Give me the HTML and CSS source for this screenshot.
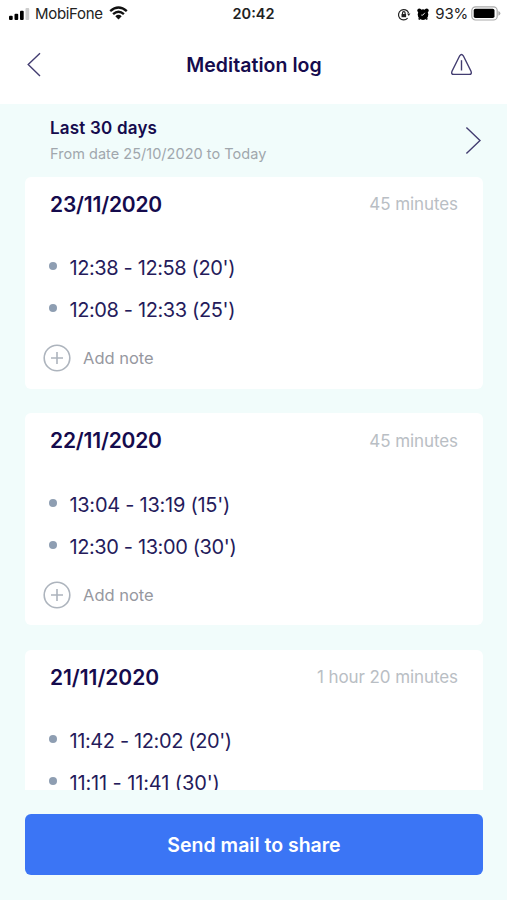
FILE: index.html
```html
<!DOCTYPE html>
<html lang="en">
<head>
<meta charset="utf-8">
<title>Meditation log</title>
<link rel="stylesheet" href="styles.css">
</head>
<body>
<div class="status">
  <div class="status-left">
    <svg class="signal" width="21" height="14" viewBox="0 0 21 14"><rect x="0" y="8.7" width="3.7" height="4.3" rx="1"/><rect x="5.5" y="6.7" width="3.7" height="6.3" rx="1"/><rect x="11" y="3.8" width="3.7" height="9.2" rx="1"/><rect class="off" x="16.5" y="1" width="3.7" height="12" rx="1"/></svg>
    <span class="carrier">MobiFone</span>
    <svg class="wifi" width="19" height="14" viewBox="0 0 19 14" fill="none" stroke="#111" stroke-width="2.4"><path d="M1.2 5.1Q9.5-2.2 17.8 5.1"/><path d="M4.1 8.2Q9.5 3.5 14.9 8.2"/><path d="M6.3 10.2Q9.5 7.5 12.7 10.2L9.5 13.5Z" fill="#111" stroke="none"/></svg>
  </div>
  <span class="clock">20:42</span>
  <div class="status-right">
    <svg class="lock" width="14" height="13" viewBox="0 0 14 13" fill="none" stroke="#222" stroke-width="1.2"><path d="M10.6 10.2A5.2 5.2 0 1 1 11.6 5"/><path d="M10 5.4h3.4L11.8 8Z" fill="#222" stroke="none"/><rect x="4.5" y="6" width="4.6" height="3.2" fill="#222" stroke="none"/><path d="M5.5 6V4.9a1.3 1.3 0 0 1 2.6 0V6"/></svg>
    <svg class="alarm" width="12" height="13" viewBox="0 0 12 13"><circle cx="6" cy="6.6" r="5.3"/><circle cx="2.3" cy="2.4" r="2"/><circle cx="9.7" cy="2.4" r="2"/><path d="M2.8 10.2L1.8 11.6M9.2 10.2l1 1.4" stroke="#111" stroke-width="1.8"/><path d="M7.8 4.8L6 7.1H4.2" fill="none" stroke="#fff" stroke-width=".8"/></svg>
    <span class="percent">93%</span>
    <svg class="battery" width="30" height="15" viewBox="0 0 30 15"><rect x=".8" y=".8" width="25.4" height="13.2" rx="3.8" fill="#fff" stroke="#aaa" stroke-width="1.2"/><rect x="2.7" y="2.7" width="20.8" height="9.4" rx="1.8" fill="#000"/><path d="M27.4 5.1q2 .8 2 2.3t-2 2.3Z" fill="#aaa"/></svg>
  </div>
</div>
<header class="header">
  <svg class="back" width="14" height="26" viewBox="0 0 14 26"><path d="M13 1.2L1.2 12.5L13 24"/></svg>
  <h1>Meditation log</h1>
  <svg class="warn" width="24" height="24" viewBox="0 0 24 24"><path d="M10.7 2.8Q12.5 .1 14.3 2.8L22 18.2Q23.2 21.4 20.3 21.4H4.7Q1.8 21.4 3 18.2Z"/><path d="M12.5 7.2V17.5"/></svg>
</header>
<main class="page">
  <section class="range">
    <div>
      <h2>Last 30 days</h2>
      <p>From date 25/10/2020 to Today</p>
    </div>
    <svg class="next" width="16" height="29" viewBox="0 0 16 29"><path d="M1.4 1.5L15 14.5L1.4 27.5"/></svg>
  </section>
  <div class="list">
    <article class="card">
      <div class="card-head"><h3>23/11/2020</h3><span>45 minutes</span></div>
      <ul><li>12:38 - 12:58 (20')</li><li>12:08 - 12:33 (25')</li></ul>
      <div class="note"><svg width="28" height="28" viewBox="0 0 28 28"><circle cx="14" cy="14" r="12.8"/><path d="M8 14H20M14 8V20"/></svg><span>Add note</span></div>
    </article>
    <article class="card">
      <div class="card-head"><h3>22/11/2020</h3><span>45 minutes</span></div>
      <ul><li class="mid">13:04 - 13:19 (15')</li><li>12:30 - 13:00 (30')</li></ul>
      <div class="note"><svg width="28" height="28" viewBox="0 0 28 28"><circle cx="14" cy="14" r="12.8"/><path d="M8 14H20M14 8V20"/></svg><span>Add note</span></div>
    </article>
    <article class="card">
      <div class="card-head"><h3 class="narrow">21/11/2020</h3><span>1 hour 20 minutes</span></div>
      <ul><li>11:42 - 12:02 (20')</li><li class="narrow">11:11 - 11:41 (30')</li></ul>
    </article>
  </div>
  <button class="share">Send mail to share</button>
</main>
</body>
</html>
```
FILE: styles.css
```css
* { box-sizing: border-box; margin: 0; padding: 0; }
body {
  width: 507px; height: 900px; overflow: hidden;
  display: flex; flex-direction: column;
  background: #fff; color: #150b4d;
  font-family: Inter, "Liberation Sans", sans-serif;
}
svg { display: block; flex: none; }
.status {
  height: 28px; padding: 0 6px 0 9px;
  display: grid; grid-template-columns: 1fr auto 1fr; align-items: center;
  color: #222; font-size: 15px; line-height: 28px;
}
.status-left, .status-right { display: flex; align-items: center; }
.status-right { justify-content: flex-end; }
.signal { margin-right: 5px; }
.signal .off { fill: #ccc; }
.carrier { margin-right: 6px; letter-spacing: -.32px; }
.wifi { margin-bottom: 2px; }
.clock { font-weight: 600; font-size: 14.5px; margin-right: 3px; }
.lock { margin-right: 6px; }
.alarm { margin-right: 6px; }
.percent { margin-right: 3px; letter-spacing: -.2px; }
.battery { margin-bottom: 1px; }
.header {
  height: 76px; padding: 0 34px 2px 27px;
  display: flex; align-items: center; justify-content: space-between;
}
h1 { font-size: 19.5px; line-height: 26px; font-weight: 600; margin-left: 18px; letter-spacing: .05px; }
.back, .warn, .next { fill: none; stroke: #423c70; stroke-width: 1.4; }
.page {
  flex: 1; min-height: 0; padding: 0 24px 24px 25px;
  display: flex; flex-direction: column; background: #f1fcfb;
}
.range {
  height: 73px; flex: none; padding: 12px 2px 0 25px;
  display: flex; justify-content: space-between;
}
.range h2 { font-size: 17px; line-height: 25px; font-weight: 600; letter-spacing: .2px; }
.range p { font-size: 14.5px; line-height: 26px; color: #a0a7ad; letter-spacing: .03px; }
.next { margin-top: 10px; }
.list {
  height: 613px; flex: none; overflow: hidden;
  display: flex; flex-direction: column; gap: 24.4px;
}
.card {
  height: 212px; flex: none; padding: 13.3px 25px 0;
  border-radius: 6px; background: #fff;
}
.card:last-child { height: auto; flex: 1; border-radius: 6px 6px 0 0; }
.card-head { display: flex; align-items: center; justify-content: space-between; height: 29px; }
.card-head h3 { font-size: 21px; line-height: 28px; font-weight: 600; letter-spacing: -.2px; }
.card-head h3.narrow { letter-spacing: -.05px; }
.card-head span { font-size: 17px; line-height: 20px; padding-bottom: 1px; color: #b9bec4; letter-spacing: -.08px; }
ul { list-style: none; margin-top: 28px; }
li { height: 42px; display: flex; align-items: center; font-size: 20px; line-height: 25px; padding-top: 1px; white-space: pre; color: #251b5b; letter-spacing: -.38px; }
li.mid { letter-spacing: -.26px; }
li.narrow { letter-spacing: -.12px; }
li::before { content: ""; width: 8px; height: 8px; margin: -5px 12px 0 0; border-radius: 50%; background: #8e9eb2; }
ul li { margin-left: -.6px; }
.note {
  display: flex; align-items: center; gap: 12px; margin: 13px 0 0 -7px; height: 28px;
  font-size: 16.5px; color: #96989f;
}
.note svg { fill: none; stroke: #adb4bd; stroke-width: 1.6; }
.share {
  height: 61px; flex: none; margin-top: 24px; width: 458px; border: 0; border-radius: 6px;
  background: #3b75f5; color: #fff; font: 600 19.5px/61px Inter, "Liberation Sans", sans-serif; padding-top: 1px;
}
```
